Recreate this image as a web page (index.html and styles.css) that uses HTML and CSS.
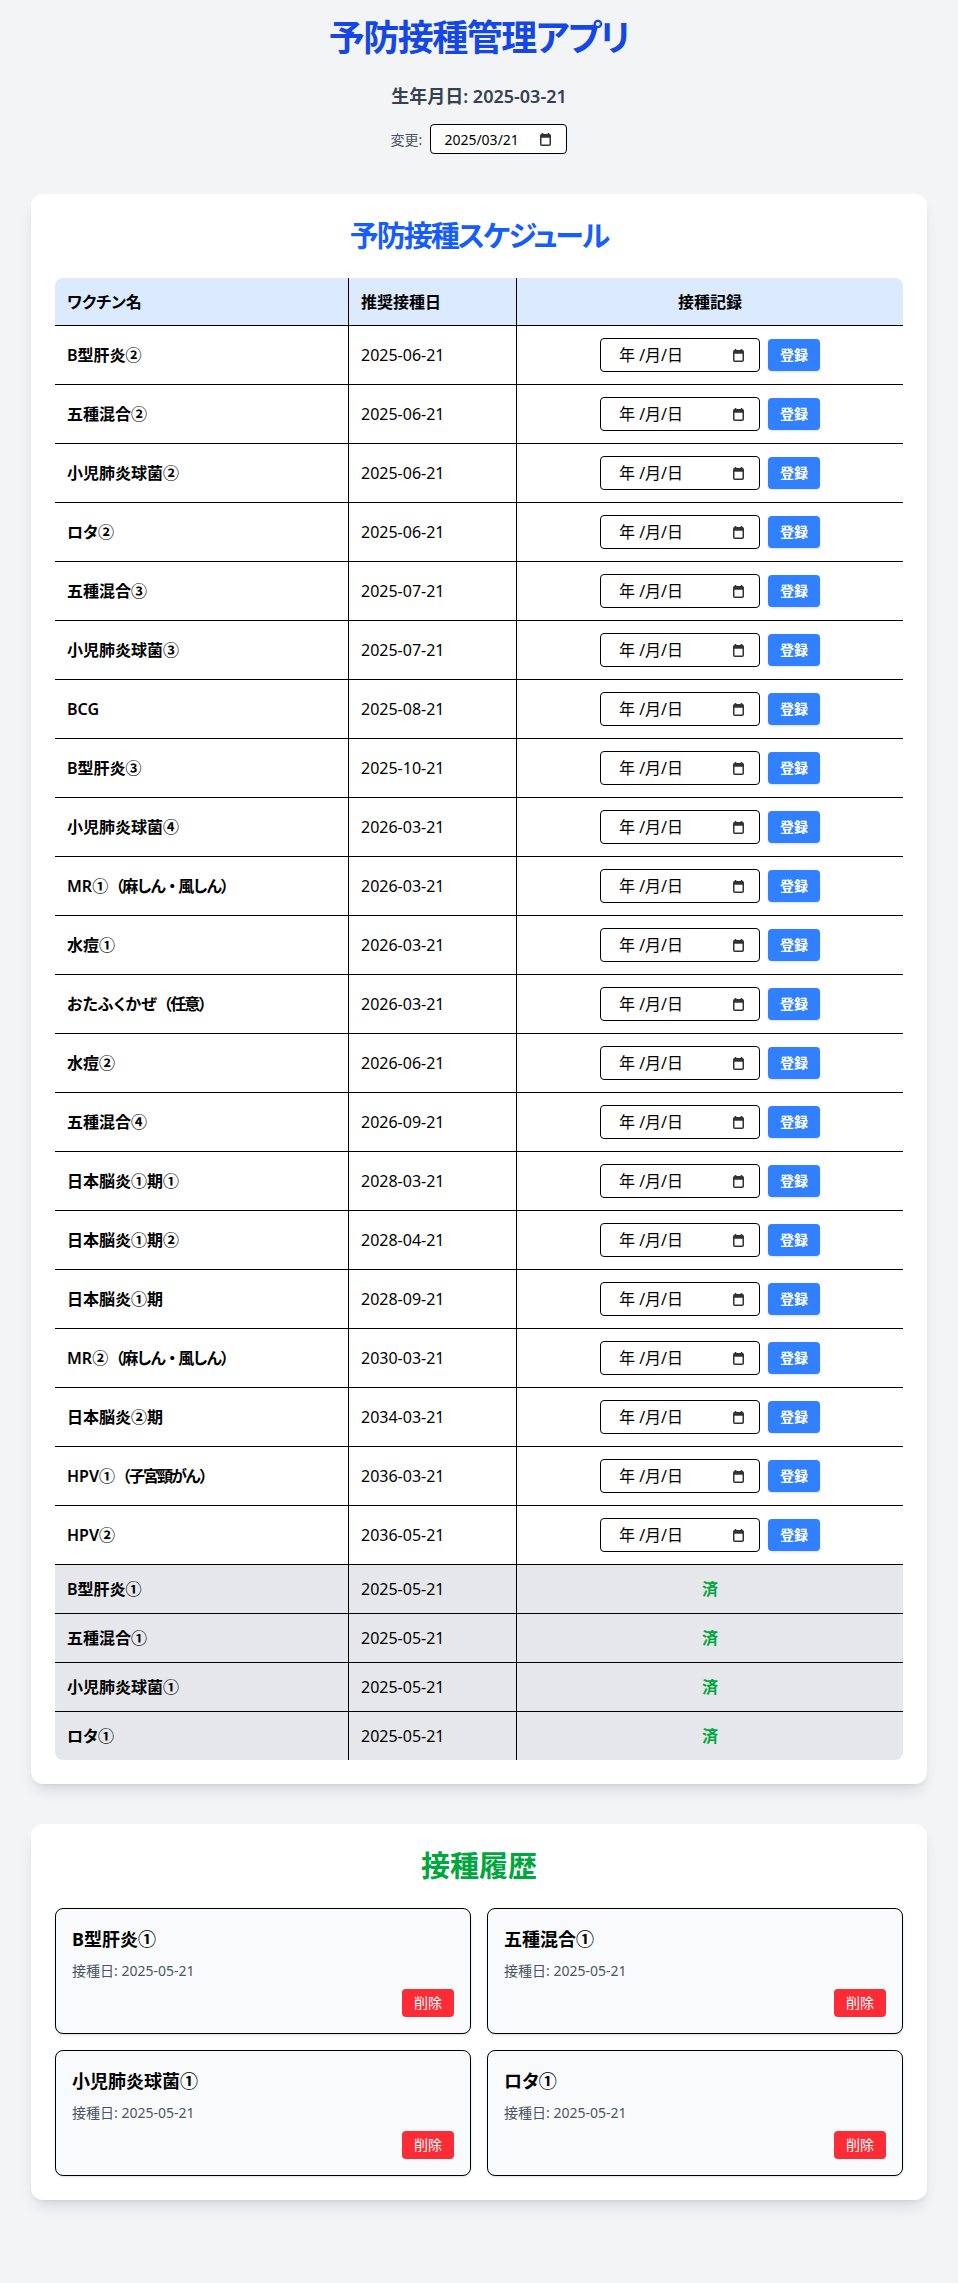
FILE: index.html
```html
<!DOCTYPE html>
<html lang="ja">
<head>
<meta charset="utf-8">
<title>予防接種管理アプリ</title>
<link rel="stylesheet" href="styles.css">
</head>
<body>
<main class="app">
  <h1 class="app-title">予防接種管理アプリ</h1>
  <p class="birth">生年月日: 2025-03-21</p>
  <div class="change">
    <span class="change-label">変更:</span>
    <span class="date-field date-field-sm"><span class="date-text">2025/03/21</span><svg class="cal" viewBox="0 0 11 13" aria-hidden="true"><path d="M2.5 0v2M8.5 0v2" stroke="#333" stroke-width="1.6"/><rect x="0.75" y="1.75" width="9.5" height="10.5" rx="1" fill="none" stroke="#333" stroke-width="1.5"/><rect x="0.75" y="1.75" width="9.5" height="3" fill="#333"/></svg></span>
  </div>

  <section class="card">
    <h2 class="card-title blue">予防接種スケジュール</h2>
    <div class="table-wrap">
      <table class="sched">
        <colgroup><col class="c-name"><col class="c-date"><col class="c-rec"></colgroup>
        <thead>
          <tr><th class="left">ワクチン名</th><th class="left">推奨接種日</th><th class="center">接種記録</th></tr>
        </thead>
        <tbody>
          <tr><td class="name">B型肝炎②</td><td>2025-06-21</td><td class="rec"><div class="rec-box"><span class="date-field"><span class="date-text">年 /月/日</span><svg class="cal" viewBox="0 0 11 13" aria-hidden="true"><path d="M2.5 0v2M8.5 0v2" stroke="#333" stroke-width="1.6"/><rect x="0.75" y="1.75" width="9.5" height="10.5" rx="1" fill="none" stroke="#333" stroke-width="1.5"/><rect x="0.75" y="1.75" width="9.5" height="3" fill="#333"/></svg></span><button class="btn-reg">登録</button></div></td></tr>
          <tr><td class="name">五種混合②</td><td>2025-06-21</td><td class="rec"><div class="rec-box"><span class="date-field"><span class="date-text">年 /月/日</span><svg class="cal" viewBox="0 0 11 13" aria-hidden="true"><path d="M2.5 0v2M8.5 0v2" stroke="#333" stroke-width="1.6"/><rect x="0.75" y="1.75" width="9.5" height="10.5" rx="1" fill="none" stroke="#333" stroke-width="1.5"/><rect x="0.75" y="1.75" width="9.5" height="3" fill="#333"/></svg></span><button class="btn-reg">登録</button></div></td></tr>
          <tr><td class="name">小児肺炎球菌②</td><td>2025-06-21</td><td class="rec"><div class="rec-box"><span class="date-field"><span class="date-text">年 /月/日</span><svg class="cal" viewBox="0 0 11 13" aria-hidden="true"><path d="M2.5 0v2M8.5 0v2" stroke="#333" stroke-width="1.6"/><rect x="0.75" y="1.75" width="9.5" height="10.5" rx="1" fill="none" stroke="#333" stroke-width="1.5"/><rect x="0.75" y="1.75" width="9.5" height="3" fill="#333"/></svg></span><button class="btn-reg">登録</button></div></td></tr>
          <tr><td class="name">ロタ②</td><td>2025-06-21</td><td class="rec"><div class="rec-box"><span class="date-field"><span class="date-text">年 /月/日</span><svg class="cal" viewBox="0 0 11 13" aria-hidden="true"><path d="M2.5 0v2M8.5 0v2" stroke="#333" stroke-width="1.6"/><rect x="0.75" y="1.75" width="9.5" height="10.5" rx="1" fill="none" stroke="#333" stroke-width="1.5"/><rect x="0.75" y="1.75" width="9.5" height="3" fill="#333"/></svg></span><button class="btn-reg">登録</button></div></td></tr>
          <tr><td class="name">五種混合③</td><td>2025-07-21</td><td class="rec"><div class="rec-box"><span class="date-field"><span class="date-text">年 /月/日</span><svg class="cal" viewBox="0 0 11 13" aria-hidden="true"><path d="M2.5 0v2M8.5 0v2" stroke="#333" stroke-width="1.6"/><rect x="0.75" y="1.75" width="9.5" height="10.5" rx="1" fill="none" stroke="#333" stroke-width="1.5"/><rect x="0.75" y="1.75" width="9.5" height="3" fill="#333"/></svg></span><button class="btn-reg">登録</button></div></td></tr>
          <tr><td class="name">小児肺炎球菌③</td><td>2025-07-21</td><td class="rec"><div class="rec-box"><span class="date-field"><span class="date-text">年 /月/日</span><svg class="cal" viewBox="0 0 11 13" aria-hidden="true"><path d="M2.5 0v2M8.5 0v2" stroke="#333" stroke-width="1.6"/><rect x="0.75" y="1.75" width="9.5" height="10.5" rx="1" fill="none" stroke="#333" stroke-width="1.5"/><rect x="0.75" y="1.75" width="9.5" height="3" fill="#333"/></svg></span><button class="btn-reg">登録</button></div></td></tr>
          <tr><td class="name">BCG</td><td>2025-08-21</td><td class="rec"><div class="rec-box"><span class="date-field"><span class="date-text">年 /月/日</span><svg class="cal" viewBox="0 0 11 13" aria-hidden="true"><path d="M2.5 0v2M8.5 0v2" stroke="#333" stroke-width="1.6"/><rect x="0.75" y="1.75" width="9.5" height="10.5" rx="1" fill="none" stroke="#333" stroke-width="1.5"/><rect x="0.75" y="1.75" width="9.5" height="3" fill="#333"/></svg></span><button class="btn-reg">登録</button></div></td></tr>
          <tr><td class="name">B型肝炎③</td><td>2025-10-21</td><td class="rec"><div class="rec-box"><span class="date-field"><span class="date-text">年 /月/日</span><svg class="cal" viewBox="0 0 11 13" aria-hidden="true"><path d="M2.5 0v2M8.5 0v2" stroke="#333" stroke-width="1.6"/><rect x="0.75" y="1.75" width="9.5" height="10.5" rx="1" fill="none" stroke="#333" stroke-width="1.5"/><rect x="0.75" y="1.75" width="9.5" height="3" fill="#333"/></svg></span><button class="btn-reg">登録</button></div></td></tr>
          <tr><td class="name">小児肺炎球菌④</td><td>2026-03-21</td><td class="rec"><div class="rec-box"><span class="date-field"><span class="date-text">年 /月/日</span><svg class="cal" viewBox="0 0 11 13" aria-hidden="true"><path d="M2.5 0v2M8.5 0v2" stroke="#333" stroke-width="1.6"/><rect x="0.75" y="1.75" width="9.5" height="10.5" rx="1" fill="none" stroke="#333" stroke-width="1.5"/><rect x="0.75" y="1.75" width="9.5" height="3" fill="#333"/></svg></span><button class="btn-reg">登録</button></div></td></tr>
          <tr><td class="name">MR①<span class="paren">（麻しん・風しん）</span></td><td>2026-03-21</td><td class="rec"><div class="rec-box"><span class="date-field"><span class="date-text">年 /月/日</span><svg class="cal" viewBox="0 0 11 13" aria-hidden="true"><path d="M2.5 0v2M8.5 0v2" stroke="#333" stroke-width="1.6"/><rect x="0.75" y="1.75" width="9.5" height="10.5" rx="1" fill="none" stroke="#333" stroke-width="1.5"/><rect x="0.75" y="1.75" width="9.5" height="3" fill="#333"/></svg></span><button class="btn-reg">登録</button></div></td></tr>
          <tr><td class="name">水痘①</td><td>2026-03-21</td><td class="rec"><div class="rec-box"><span class="date-field"><span class="date-text">年 /月/日</span><svg class="cal" viewBox="0 0 11 13" aria-hidden="true"><path d="M2.5 0v2M8.5 0v2" stroke="#333" stroke-width="1.6"/><rect x="0.75" y="1.75" width="9.5" height="10.5" rx="1" fill="none" stroke="#333" stroke-width="1.5"/><rect x="0.75" y="1.75" width="9.5" height="3" fill="#333"/></svg></span><button class="btn-reg">登録</button></div></td></tr>
          <tr><td class="name">おたふくかぜ<span class="paren">（任意）</span></td><td>2026-03-21</td><td class="rec"><div class="rec-box"><span class="date-field"><span class="date-text">年 /月/日</span><svg class="cal" viewBox="0 0 11 13" aria-hidden="true"><path d="M2.5 0v2M8.5 0v2" stroke="#333" stroke-width="1.6"/><rect x="0.75" y="1.75" width="9.5" height="10.5" rx="1" fill="none" stroke="#333" stroke-width="1.5"/><rect x="0.75" y="1.75" width="9.5" height="3" fill="#333"/></svg></span><button class="btn-reg">登録</button></div></td></tr>
          <tr><td class="name">水痘②</td><td>2026-06-21</td><td class="rec"><div class="rec-box"><span class="date-field"><span class="date-text">年 /月/日</span><svg class="cal" viewBox="0 0 11 13" aria-hidden="true"><path d="M2.5 0v2M8.5 0v2" stroke="#333" stroke-width="1.6"/><rect x="0.75" y="1.75" width="9.5" height="10.5" rx="1" fill="none" stroke="#333" stroke-width="1.5"/><rect x="0.75" y="1.75" width="9.5" height="3" fill="#333"/></svg></span><button class="btn-reg">登録</button></div></td></tr>
          <tr><td class="name">五種混合④</td><td>2026-09-21</td><td class="rec"><div class="rec-box"><span class="date-field"><span class="date-text">年 /月/日</span><svg class="cal" viewBox="0 0 11 13" aria-hidden="true"><path d="M2.5 0v2M8.5 0v2" stroke="#333" stroke-width="1.6"/><rect x="0.75" y="1.75" width="9.5" height="10.5" rx="1" fill="none" stroke="#333" stroke-width="1.5"/><rect x="0.75" y="1.75" width="9.5" height="3" fill="#333"/></svg></span><button class="btn-reg">登録</button></div></td></tr>
          <tr><td class="name">日本脳炎①期①</td><td>2028-03-21</td><td class="rec"><div class="rec-box"><span class="date-field"><span class="date-text">年 /月/日</span><svg class="cal" viewBox="0 0 11 13" aria-hidden="true"><path d="M2.5 0v2M8.5 0v2" stroke="#333" stroke-width="1.6"/><rect x="0.75" y="1.75" width="9.5" height="10.5" rx="1" fill="none" stroke="#333" stroke-width="1.5"/><rect x="0.75" y="1.75" width="9.5" height="3" fill="#333"/></svg></span><button class="btn-reg">登録</button></div></td></tr>
          <tr><td class="name">日本脳炎①期②</td><td>2028-04-21</td><td class="rec"><div class="rec-box"><span class="date-field"><span class="date-text">年 /月/日</span><svg class="cal" viewBox="0 0 11 13" aria-hidden="true"><path d="M2.5 0v2M8.5 0v2" stroke="#333" stroke-width="1.6"/><rect x="0.75" y="1.75" width="9.5" height="10.5" rx="1" fill="none" stroke="#333" stroke-width="1.5"/><rect x="0.75" y="1.75" width="9.5" height="3" fill="#333"/></svg></span><button class="btn-reg">登録</button></div></td></tr>
          <tr><td class="name">日本脳炎①期</td><td>2028-09-21</td><td class="rec"><div class="rec-box"><span class="date-field"><span class="date-text">年 /月/日</span><svg class="cal" viewBox="0 0 11 13" aria-hidden="true"><path d="M2.5 0v2M8.5 0v2" stroke="#333" stroke-width="1.6"/><rect x="0.75" y="1.75" width="9.5" height="10.5" rx="1" fill="none" stroke="#333" stroke-width="1.5"/><rect x="0.75" y="1.75" width="9.5" height="3" fill="#333"/></svg></span><button class="btn-reg">登録</button></div></td></tr>
          <tr><td class="name">MR②<span class="paren">（麻しん・風しん）</span></td><td>2030-03-21</td><td class="rec"><div class="rec-box"><span class="date-field"><span class="date-text">年 /月/日</span><svg class="cal" viewBox="0 0 11 13" aria-hidden="true"><path d="M2.5 0v2M8.5 0v2" stroke="#333" stroke-width="1.6"/><rect x="0.75" y="1.75" width="9.5" height="10.5" rx="1" fill="none" stroke="#333" stroke-width="1.5"/><rect x="0.75" y="1.75" width="9.5" height="3" fill="#333"/></svg></span><button class="btn-reg">登録</button></div></td></tr>
          <tr><td class="name">日本脳炎②期</td><td>2034-03-21</td><td class="rec"><div class="rec-box"><span class="date-field"><span class="date-text">年 /月/日</span><svg class="cal" viewBox="0 0 11 13" aria-hidden="true"><path d="M2.5 0v2M8.5 0v2" stroke="#333" stroke-width="1.6"/><rect x="0.75" y="1.75" width="9.5" height="10.5" rx="1" fill="none" stroke="#333" stroke-width="1.5"/><rect x="0.75" y="1.75" width="9.5" height="3" fill="#333"/></svg></span><button class="btn-reg">登録</button></div></td></tr>
          <tr><td class="name">HPV①<span class="paren">（子宮頸がん）</span></td><td>2036-03-21</td><td class="rec"><div class="rec-box"><span class="date-field"><span class="date-text">年 /月/日</span><svg class="cal" viewBox="0 0 11 13" aria-hidden="true"><path d="M2.5 0v2M8.5 0v2" stroke="#333" stroke-width="1.6"/><rect x="0.75" y="1.75" width="9.5" height="10.5" rx="1" fill="none" stroke="#333" stroke-width="1.5"/><rect x="0.75" y="1.75" width="9.5" height="3" fill="#333"/></svg></span><button class="btn-reg">登録</button></div></td></tr>
          <tr><td class="name">HPV②</td><td>2036-05-21</td><td class="rec"><div class="rec-box"><span class="date-field"><span class="date-text">年 /月/日</span><svg class="cal" viewBox="0 0 11 13" aria-hidden="true"><path d="M2.5 0v2M8.5 0v2" stroke="#333" stroke-width="1.6"/><rect x="0.75" y="1.75" width="9.5" height="10.5" rx="1" fill="none" stroke="#333" stroke-width="1.5"/><rect x="0.75" y="1.75" width="9.5" height="3" fill="#333"/></svg></span><button class="btn-reg">登録</button></div></td></tr>
          <tr class="done"><td class="name">B型肝炎①</td><td>2025-05-21</td><td class="rec done-mark">済</td></tr>
          <tr class="done"><td class="name">五種混合①</td><td>2025-05-21</td><td class="rec done-mark">済</td></tr>
          <tr class="done"><td class="name">小児肺炎球菌①</td><td>2025-05-21</td><td class="rec done-mark">済</td></tr>
          <tr class="done"><td class="name">ロタ①</td><td>2025-05-21</td><td class="rec done-mark">済</td></tr>
        </tbody>
      </table>
    </div>
  </section>

  <section class="card">
    <h2 class="card-title green">接種履歴</h2>
    <div class="history">
      <div class="hist-item">
        <div class="hist-name">B型肝炎①</div>
        <div class="hist-date">接種日: 2025-05-21</div>
        <div class="hist-actions"><button class="btn-del">削除</button></div>
      </div>
      <div class="hist-item">
        <div class="hist-name">五種混合①</div>
        <div class="hist-date">接種日: 2025-05-21</div>
        <div class="hist-actions"><button class="btn-del">削除</button></div>
      </div>
      <div class="hist-item">
        <div class="hist-name">小児肺炎球菌①</div>
        <div class="hist-date">接種日: 2025-05-21</div>
        <div class="hist-actions"><button class="btn-del">削除</button></div>
      </div>
      <div class="hist-item">
        <div class="hist-name">ロタ①</div>
        <div class="hist-date">接種日: 2025-05-21</div>
        <div class="hist-actions"><button class="btn-del">削除</button></div>
      </div>
    </div>
  </section>
</main>
</body>
</html>
```
FILE: styles.css
```css
* { box-sizing: border-box; }

body {
  margin: 0;
  background: #f3f4f6;
  color: #000;
  font-family: "Noto Sans", "Noto Sans CJK JP", sans-serif;
  font-feature-settings: "palt";
}

.app {
  max-width: 896px;
  margin: 0 auto;
  padding: 18px 0 40px;
}

.app-title {
  margin: 0 0 24px;
  font-size: 36px;
  line-height: 40px;
  font-weight: 700;
  letter-spacing: -1.5px;
  color: #1447e6;
  text-align: center;
}

.birth {
  margin: 0 0 14px;
  font-size: 18px;
  line-height: 28px;
  font-weight: 600;
  color: #364153;
  text-align: center;
}

.change {
  display: flex;
  justify-content: center;
  align-items: center;
  gap: 8px;
  margin-bottom: 40px;
  font-size: 14px;
  color: #4a5565;
}

.date-field {
  display: inline-flex;
  align-items: center;
  justify-content: space-between;
  width: 160px;
  height: 34px;
  padding: 0 15px 0 18px;
  border: 1px solid #000;
  border-radius: 4px;
  background: #fff;
  color: #000;
  font-size: 16px;
}

.date-field-sm {
  width: 137px;
  height: 30px;
  padding: 0 15px 0 13px;
  font-size: 14px;
  font-feature-settings: normal;
}

.cal {
  width: 11px;
  height: 13px;
  flex: none;
}

.card {
  background: #fff;
  border-radius: 12px;
  padding: 24px;
  margin-bottom: 40px;
  box-shadow: 0 10px 15px -3px rgba(0, 0, 0, 0.1), 0 4px 6px -4px rgba(0, 0, 0, 0.1);
}

.card-title {
  margin: 0 0 24px;
  font-size: 29px;
  line-height: 36px;
  font-weight: 700;
  letter-spacing: -2px;
  text-align: center;
}

.card-title.blue { color: #155dfc; }
.card-title.green { color: #00a63e; letter-spacing: 0; }

.table-wrap {
  border-radius: 8px;
  overflow: hidden;
}

.sched {
  width: 100%;
  border-collapse: separate;
  border-spacing: 0;
  font-size: 16px;
  line-height: 24px;
  table-layout: fixed;
}

.c-name { width: 294px; }
.c-date { width: 168px; }

.sched th {
  background: #dbeafe;
  padding: 12px 12px 11px;
  font-weight: 700;
  border-bottom: 1px solid #000;
}

.sched th.left { text-align: left; }
.sched th.center { text-align: center; }

.sched td {
  padding: 12px;
  border-bottom: 1px solid #000;
  vertical-align: middle;
}

.sched th:not(:last-child),
.sched td:not(:last-child) {
  border-right: 1px solid #000;
}

.sched tbody tr:last-child td { border-bottom: none; }

.sched td.name { font-weight: 600; }

.paren { font-feature-settings: normal; letter-spacing: -2px; }

.sched td.rec { text-align: center; }

.rec-box {
  display: flex;
  justify-content: center;
  align-items: center;
  gap: 8px;
}

.btn-reg {
  border: none;
  border-radius: 4px;
  background: #3080ff;
  color: #fff;
  font-family: inherit;
  font-size: 14px;
  line-height: 20px;
  font-weight: 700;
  padding: 6px 12px;
  box-shadow: 0 1px 3px rgba(0, 0, 0, 0.1), 0 1px 2px -1px rgba(0, 0, 0, 0.1);
}

.sched tr.done td { background: #e5e7eb; }

.done-mark {
  color: #00a63e;
  font-weight: 700;
}

.history {
  display: grid;
  grid-template-columns: 1fr 1fr;
  gap: 16px;
}

.hist-item {
  border: 1px solid #000;
  border-radius: 8px;
  background: #f9fafb;
  padding: 16px;
  box-shadow: 0 1px 3px rgba(0, 0, 0, 0.1), 0 1px 2px -1px rgba(0, 0, 0, 0.1);
}

.hist-name {
  font-size: 18px;
  line-height: 28px;
  font-weight: 700;
  margin-bottom: 8px;
}

.hist-date {
  font-size: 14px;
  line-height: 20px;
  color: #4a5565;
}

.hist-actions {
  display: flex;
  justify-content: flex-end;
  margin-top: 8px;
}

.btn-del {
  border: none;
  border-radius: 4px;
  background: #fb2c36;
  color: #fff;
  font-family: inherit;
  font-size: 14px;
  line-height: 20px;
  padding: 4px 12px;
}
```
